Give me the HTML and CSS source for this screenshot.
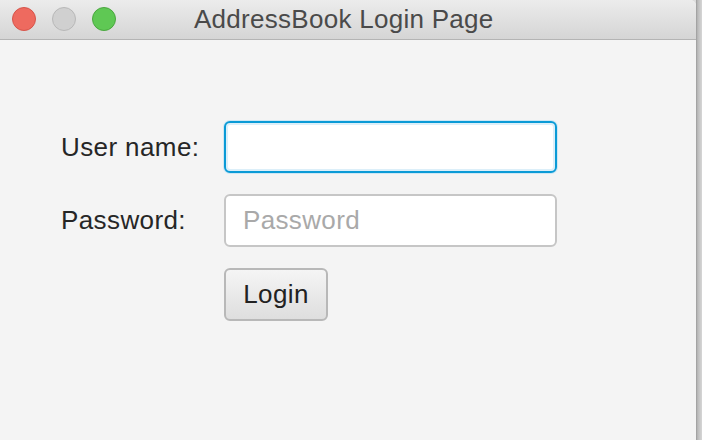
FILE: index.html
```html
<!DOCTYPE html>
<html lang="en">
<head>
<meta charset="utf-8">
<title>AddressBook Login Page</title>
<link rel="stylesheet" href="styles.css">
</head>
<body>
<div class="screen">
  <div class="window">
    <div class="titlebar">
      <div class="lights">
        <span class="light red"></span>
        <span class="light gray"></span>
        <span class="light green"></span>
      </div>
      <div class="title">AddressBook Login Page</div>
    </div>
    <div class="content">
      <div class="form">
        <label class="label">User name:</label>
        <div class="field focused"></div>
        <label class="label">Password:</label>
        <div class="field"><span class="placeholder">Password</span></div>
        <div></div>
        <div class="actions"><button class="btn">Login</button></div>
      </div>
    </div>
  </div>
  <div class="shadow"></div>
</div>
</body>
</html>
```

FILE: styles.css
```css
html, body {
  margin: 0;
  padding: 0;
  width: 702px;
  height: 440px;
  overflow: hidden;
  font-family: "Liberation Sans", Arial, sans-serif;
}

.screen {
  display: flex;
  width: 702px;
  height: 440px;
  background: #dcdcdc;
}

.window {
  width: 696px;
  height: 440px;
  background: #f4f4f4;
  border-top-right-radius: 6px;
  display: flex;
  flex-direction: column;
  overflow: hidden;
}

.shadow {
  flex: 1;
  background: linear-gradient(to right, #959595 0, #b2b2b2 1px, #c4c4c4 3px, #d6d6d6 6px);
}

.titlebar {
  height: 39px;
  border-bottom: 1px solid #b4b4b4;
  background: linear-gradient(to bottom, #ececec, #d5d5d5);
  display: flex;
  align-items: center;
  flex-shrink: 0;
}

.lights {
  display: flex;
  gap: 16px;
  padding-left: 12px;
  margin-top: -2px;
}

.light {
  width: 22px;
  height: 22px;
  border-radius: 50%;
  display: block;
}
.light.red { background: #ee6a5f; border: 1px solid #d6544a; }
.light.gray { background: #d0d0d0; border: 1px solid #b8b8b8; }
.light.green { background: #5fc854; border: 1px solid #4aa73f; }

.title {
  margin-left: 78px;
  margin-top: -2px;
  font-size: 26px;
  color: #4a4a4a;
  letter-spacing: 0.28px;
  line-height: 1;
}

.content {
  flex: 1;
  padding-top: 81px;
  padding-left: 61px;
}

.form {
  display: grid;
  grid-template-columns: 163px 333px;
  row-gap: 21px;
  align-items: center;
}

.label {
  font-size: 26px;
  color: #262626;
  letter-spacing: 0.4px;
}

.field {
  height: 53px;
  box-sizing: border-box;
  border: 2px solid #c6c6c6;
  border-radius: 6px;
  background: #ffffff;
  display: flex;
  align-items: center;
  padding-left: 17px;
}

.field.focused {
  height: 52px;
  border: 2px solid #0a9ad6;
  box-shadow: 0 0 0 1px #cde7f4, inset 0 0 0 2px #dceff9;
}

.placeholder {
  font-size: 26px;
  color: #a9a9a9;
  letter-spacing: 0.35px;
}

.btn {
  width: 104px;
  height: 53px;
  box-sizing: border-box;
  border: 2px solid #b8b8b8;
  border-radius: 6px;
  background: linear-gradient(to bottom, #f5f5f5, #dedede);
  font-family: "Liberation Sans", Arial, sans-serif;
  font-size: 26px;
  letter-spacing: 0.4px;
  color: #222222;
  padding: 0;
  display: block;
}
```
